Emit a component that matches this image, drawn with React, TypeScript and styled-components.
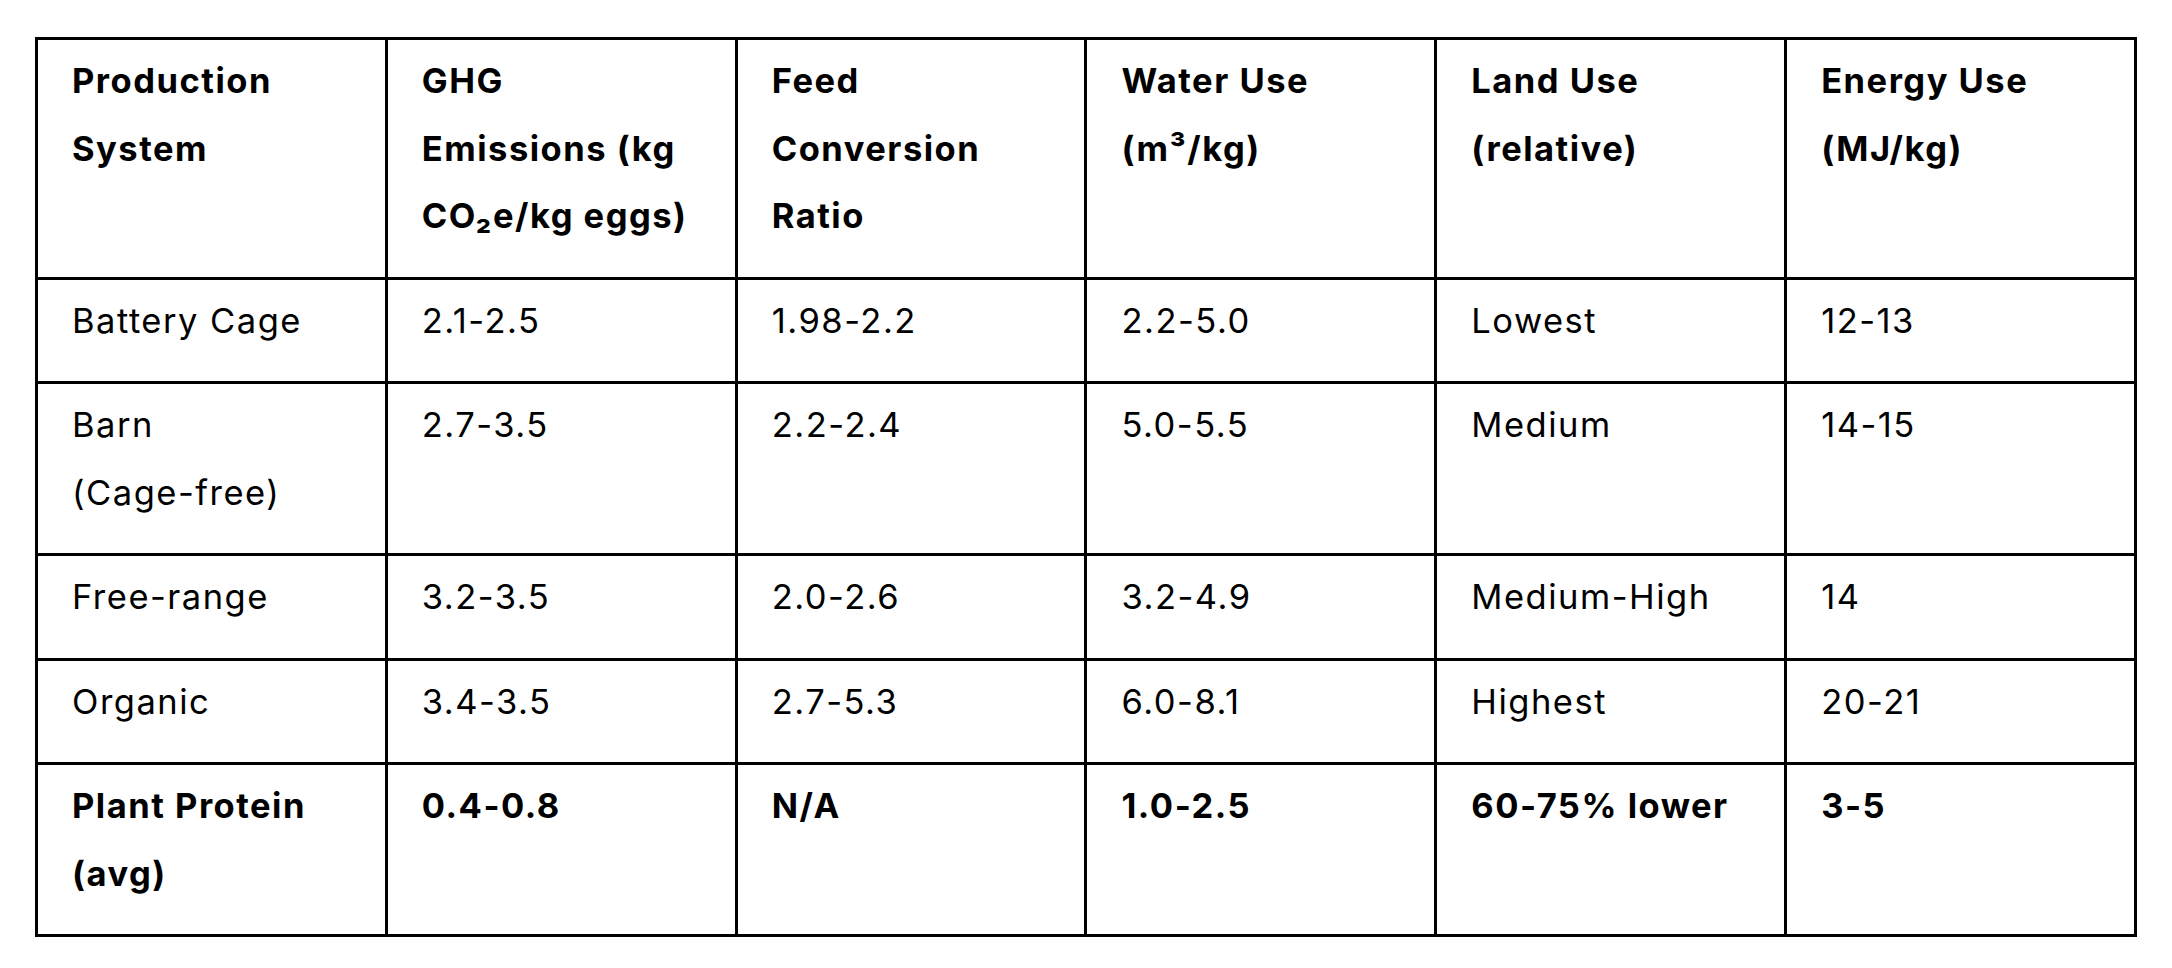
import React from "react";
import styled, { createGlobalStyle } from "styled-components";

const GlobalStyle = createGlobalStyle`
  html, body {
    margin: 0;
    padding: 0;
    background: #ffffff;
  }
  body {
    font-family: Inter, "Noto Sans", "Liberation Sans", sans-serif;
    color: #000000;
  }
`;

const Page = styled.main`
  padding: 37px 35px 32px 35px;
`;

const Table = styled.table`
  width: 2102px;
  table-layout: fixed;
  border-collapse: collapse;
  border: 3px solid #000;
  font-size: 34.5px;
  line-height: 67.5px;
  letter-spacing: 1.5px;
`;

const HeadCell = styled.th`
  border: 3px solid #000;
  padding: 7px 44px 27px 34px;
  text-align: left;
  vertical-align: top;
  font-weight: 700;
`;

const Cell = styled.td<{ $strong?: boolean }>`
  border: 3px solid #000;
  padding: 7px 44px 27px 34px;
  text-align: left;
  vertical-align: top;
  font-weight: ${(p) => (p.$strong ? 700 : 400)};
`;

const NoWrap = styled.span`
  white-space: nowrap;
`;

const headers = [
  "Production System",
  "GHG Emissions (kg CO₂e/kg eggs)",
  "Feed Conversion Ratio",
  "Water Use (m³/kg)",
  "Land Use (relative)",
  "Energy Use (MJ/kg)",
];

const renderText = (text: string) =>
  text.split(" ").map((word, i, all) => (
    <React.Fragment key={i}>
      {word.includes("-") && /[a-z]/i.test(word) ? <NoWrap>{word}</NoWrap> : word}
      {i < all.length - 1 ? " " : null}
    </React.Fragment>
  ));

const rows: { cells: string[]; strong?: boolean }[] = [
  { cells: ["Battery Cage", "2.1-2.5", "1.98-2.2", "2.2-5.0", "Lowest", "12-13"] },
  { cells: ["Barn (Cage-free)", "2.7-3.5", "2.2-2.4", "5.0-5.5", "Medium", "14-15"] },
  { cells: ["Free-range", "3.2-3.5", "2.0-2.6", "3.2-4.9", "Medium-High", "14"] },
  { cells: ["Organic", "3.4-3.5", "2.7-5.3", "6.0-8.1", "Highest", "20-21"] },
  { cells: ["Plant Protein (avg)", "0.4-0.8", "N/A", "1.0-2.5", "60-75% lower", "3-5"], strong: true },
];

export default function App() {
  return (
    <>
      <GlobalStyle />
      <Page>
        <Table>
          <thead>
            <tr>
              {headers.map((h) => (
                <HeadCell key={h}>{h}</HeadCell>
              ))}
            </tr>
          </thead>
          <tbody>
            {rows.map((r) => (
              <tr key={r.cells[0]}>
                {r.cells.map((c, i) => (
                  <Cell key={i} $strong={r.strong}>
                    {renderText(c)}
                  </Cell>
                ))}
              </tr>
            ))}
          </tbody>
        </Table>
      </Page>
    </>
  );
}
